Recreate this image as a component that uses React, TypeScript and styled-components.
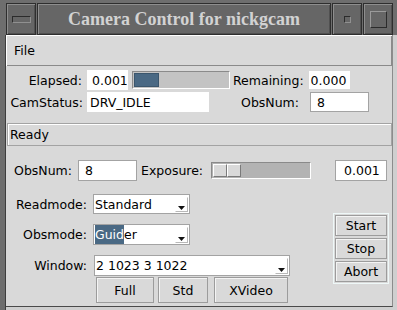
import styled, { createGlobalStyle } from "styled-components";

const GlobalStyle = createGlobalStyle`
  html, body {
    margin: 0;
    padding: 0;
    background: #d9d9d9;
  }
  body {
    font-family: "DejaVu Sans", "Liberation Sans", sans-serif;
    font-size: 12.5px;
    color: #000;
  }
`;

const Window = styled.div`
  display: flex;
  flex-direction: column;
  width: 397px;
  height: 310px;
  background: #6e6e6e;
  overflow: hidden;
`;

const TitleBar = styled.div`
  display: flex;
  flex: none;
  gap: 1px;
  height: 32px;
  margin: 3px 4px 0 6px;
`;

const TitleCell = styled.div<{ $w?: number }>`
  display: flex;
  flex: ${({ $w }) => ($w ? `0 0 ${$w}px` : "1 1 auto")};
  align-items: center;
  justify-content: center;
  box-sizing: border-box;
  border: 1px solid #2e2e2e;
  background: #666666;
  box-shadow:
    inset 1px 1px 0 #8e8e8e,
    inset -1px -1px 0 #505050;
`;

const TitleText = styled.span`
  color: #d2d2d2;
  font-family: "Liberation Serif", "Times New Roman", serif;
  font-size: 18px;
  font-weight: 700;
  white-space: nowrap;
  transform: scaleY(1.08);
`;

const FrameGlyph = styled.span<{ $w: number; $h: number; $raised?: boolean }>`
  display: block;
  box-sizing: border-box;
  width: ${({ $w }) => $w}px;
  height: ${({ $h }) => $h}px;
  border: 1px solid;
  border-color: ${({ $raised }) =>
    $raised ? "#9a9a9a #2b2b2b #2b2b2b #9a9a9a" : "#2b2b2b #909090 #909090 #2b2b2b"};
  background: #666666;
`;

const Body = styled.div`
  display: flex;
  flex: 1 1 auto;
  min-height: 0;
  background: #cfcfcf;
`;

const LeftRail = styled.div`
  flex: 0 0 6px;
  box-sizing: border-box;
  border-right: 1px solid #3e3e3e;
  background: #6e6e6e;
`;

const Content = styled.div`
  display: flex;
  flex: 1 1 auto;
  flex-direction: column;
  margin: 0 4px 3px 0;
  border-right: 1px solid #8c8c8c;
  border-bottom: 1px solid #4a4a4a;
  background: #d9d9d9;
`;

const MenuBar = styled.div`
  display: flex;
  flex: none;
  align-items: center;
  box-sizing: border-box;
  height: 31px;
  padding: 0 0 1px 8px;
  box-shadow:
    inset 1px 1px 0 #ffffff,
    inset -1px -1px 0 #8a8a8a;
`;

const MenuItem = styled.span`
  font-size: 12.5px;
`;

const Row = styled.div<{ $top: number; $h?: number }>`
  display: flex;
  flex: none;
  align-items: center;
  height: ${({ $h }) => $h ?? 20}px;
  margin-top: ${({ $top }) => $top}px;
`;

const Label = styled.span<{ $w?: number; $ml?: number; $left?: boolean }>`
  flex: none;
  width: ${({ $w }) => ($w ? `${$w}px` : "auto")};
  margin-left: ${({ $ml }) => $ml ?? 0}px;
  text-align: ${({ $left }) => ($left ? "left" : "right")};
  white-space: nowrap;
`;

const Entry = styled.div<{ $w: number; $h?: number; $ml?: number; $pl?: number; $framed?: boolean }>`
  display: flex;
  flex: none;
  align-items: center;
  box-sizing: border-box;
  width: ${({ $w }) => $w}px;
  height: ${({ $h }) => $h ?? 20}px;
  margin-left: ${({ $ml }) => $ml ?? 0}px;
  padding-left: ${({ $pl }) => $pl ?? 2}px;
  border: 1px solid ${({ $framed }) => ($framed ? "#a3a3a3" : "#ffffff")};
  background: #ffffff;
  white-space: nowrap;
  overflow: hidden;
`;

const Progress = styled.div<{ $w: number; $ml: number }>`
  flex: none;
  box-sizing: border-box;
  width: ${({ $w }) => $w}px;
  height: 18px;
  margin-left: ${({ $ml }) => $ml}px;
  padding: 1px;
  border: 1px solid;
  border-color: #8a8a8a #ffffff #ffffff #8a8a8a;
  background: #c3c3c3;
`;

const ProgressFill = styled.div`
  box-sizing: border-box;
  height: 100%;
  border: 1px solid #3b566d;
  background: #4a6984;
`;

const StatusBar = styled.div`
  display: flex;
  flex: none;
  align-items: center;
  box-sizing: border-box;
  height: 23px;
  margin: 11px 0 0 1px;
  padding-left: 2px;
  border: 1px solid #a3a3a3;
  box-shadow: inset 1px 1px 0 #ffffff;
`;

const Slider = styled.div<{ $ml: number }>`
  display: flex;
  flex: none;
  align-items: center;
  box-sizing: border-box;
  width: 100px;
  height: 17px;
  margin-left: ${({ $ml }) => $ml}px;
  padding: 1px;
  border: 1px solid;
  border-color: #8a8a8a #ffffff #ffffff #8a8a8a;
  background: #b3b3b3;
`;

const SliderHalf = styled.span`
  display: block;
  box-sizing: border-box;
  width: 14px;
  height: 13px;
  border: 1px solid;
  border-color: #ffffff #7a7a7a #7a7a7a #ffffff;
  background: #d9d9d9;
`;

const Lower = styled.div`
  display: flex;
  flex: 1 1 auto;
  margin-top: 13px;
`;

const LeftColumn = styled.div`
  display: flex;
  flex-direction: column;
`;

const Combo = styled.div<{ $w: number; $h: number; $ml: number }>`
  display: flex;
  flex: none;
  align-items: stretch;
  box-sizing: border-box;
  width: ${({ $w }) => $w}px;
  height: ${({ $h }) => $h}px;
  margin-left: ${({ $ml }) => $ml}px;
  border: 1px solid #a3a3a3;
  background: #ffffff;
`;

const ComboText = styled.span`
  display: flex;
  flex: 1 1 auto;
  align-items: center;
  padding-left: 1px;
  white-space: nowrap;
  overflow: hidden;
`;

const Selected = styled.span`
  display: flex;
  align-items: center;
  align-self: stretch;
  color: #ffffff;
  background: #4a6984;
`;

const ArrowBox = styled.span`
  display: flex;
  flex: 0 0 13px;
  align-items: center;
  justify-content: center;
  box-sizing: border-box;
  margin: 2px 1px 1px 0;
  padding-top: 7px;
  border: 1px solid;
  border-color: #ffffff #b8b8b8 #b8b8b8 #ffffff;
`;

const ButtonRow = styled.div`
  display: flex;
  margin: 1px 0 0 90px;
`;

const Button = styled.div<{ $w: number; $h: number; $ml?: number }>`
  display: flex;
  flex: none;
  align-items: center;
  justify-content: center;
  box-sizing: border-box;
  width: ${({ $w }) => $w}px;
  height: ${({ $h }) => $h}px;
  margin-left: ${({ $ml }) => $ml ?? 0}px;
  border: 1px solid #9c9c9c;
  background: #d9d9d9;
  box-shadow: inset 1px 1px 0 #f4f4f4;
`;

const ActionFrame = styled.div`
  display: flex;
  flex-direction: column;
  gap: 2px;
  align-self: flex-start;
  margin: 19px 3px 0 auto;
  padding: 1px;
  border: 1px solid #eef8f8;
`;

function DropArrow() {
  return (
    <svg width="7" height="4" viewBox="0 0 7 4" aria-hidden="true">
      <polygon points="0,0 7,0 3.5,4" fill="#111" />
    </svg>
  );
}

export default function App() {
  const elapsed = 0.001;
  const total = 0.0038;
  const pct = Math.min(100, (elapsed / total) * 100);

  return (
    <>
      <GlobalStyle />
      <Window>
        <TitleBar>
          <TitleCell $w={30}>
            <FrameGlyph $w={19} $h={7} />
          </TitleCell>
          <TitleCell>
            <TitleText>Camera Control for nickgcam</TitleText>
          </TitleCell>
          <TitleCell $w={30}>
            <FrameGlyph $w={7} $h={7} />
          </TitleCell>
          <TitleCell $w={30}>
            <FrameGlyph $w={17} $h={17} $raised />
          </TitleCell>
        </TitleBar>
        <Body>
          <LeftRail />
          <Content>
            <MenuBar>
              <MenuItem>File</MenuItem>
            </MenuBar>

            <Row $top={4}>
              <Label $w={76}>Elapsed:</Label>
              <Entry $w={41} $ml={5} $pl={4}>0.001</Entry>
              <Progress $w={98} $ml={4}>
                <ProgressFill style={{ width: `${pct}%` }} />
              </Progress>
              <Label $ml={3}>Remaining:</Label>
              <Entry $w={41} $h={18} $ml={5} $pl={1}>0.000</Entry>
            </Row>

            <Row $top={2}>
              <Label $w={77}>CamStatus:</Label>
              <Entry $w={122} $ml={4}>DRV_IDLE</Entry>
              <Label $w={90}>ObsNum:</Label>
              <Entry $w={59} $ml={11} $pl={6} $framed>8</Entry>
            </Row>

            <StatusBar>Ready</StatusBar>

            <Row $top={14} $h={21}>
              <Label $w={66}>ObsNum:</Label>
              <Entry $w={59} $h={21} $ml={6} $pl={6} $framed>8</Entry>
              <Label $w={66} $ml={4} $left>Exposure:</Label>
              <Slider $ml={4}>
                <SliderHalf />
                <SliderHalf />
              </Slider>
              <Entry $w={52} $h={21} $ml={24} $pl={8} $framed>0.001</Entry>
            </Row>

            <Lower>
              <LeftColumn>
                <Row $top={0}>
                  <Label $w={81}>Readmode:</Label>
                  <Combo $w={97} $h={20} $ml={6}>
                    <ComboText>Standard</ComboText>
                    <ArrowBox><DropArrow /></ArrowBox>
                  </Combo>
                </Row>
                <Row $top={10} $h={21}>
                  <Label $w={81}>Obsmode:</Label>
                  <Combo $w={97} $h={21} $ml={6}>
                    <ComboText>
                      <Selected>Guid</Selected>er
                    </ComboText>
                    <ArrowBox><DropArrow /></ArrowBox>
                  </Combo>
                </Row>
                <Row $top={10} $h={21}>
                  <Label $w={81}>Window:</Label>
                  <Combo $w={196} $h={21} $ml={7}>
                    <ComboText>2 1023 3 1022</ComboText>
                    <ArrowBox><DropArrow /></ArrowBox>
                  </Combo>
                </Row>
                <ButtonRow>
                  <Button $w={58} $h={26}>Full</Button>
                  <Button $w={50} $h={26} $ml={4}>Std</Button>
                  <Button $w={74} $h={26} $ml={6}>XVideo</Button>
                </ButtonRow>
              </LeftColumn>

              <ActionFrame>
                <Button $w={52} $h={21}>Start</Button>
                <Button $w={52} $h={21}>Stop</Button>
                <Button $w={52} $h={21}>Abort</Button>
              </ActionFrame>
            </Lower>
          </Content>
        </Body>
      </Window>
    </>
  );
}
